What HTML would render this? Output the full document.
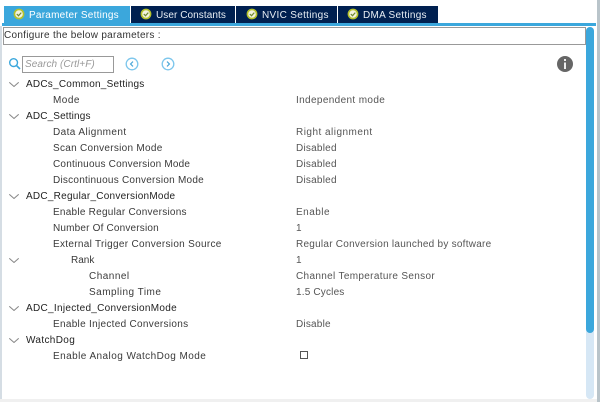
<!DOCTYPE html>
<html><head><meta charset="utf-8">
<style>
html,body{margin:0;padding:0;background:#fff}
#p{position:relative;width:600px;height:402px;overflow:hidden;background:#fff;font-family:"Liberation Sans",sans-serif;font-size:10px;color:#3a3a3a}
.a{position:absolute}
.t{position:absolute;white-space:nowrap;line-height:16px;letter-spacing:.25px}
.tab{position:absolute;top:6px;height:17px;background:#002050;color:#e8eef4;font-size:10px;line-height:18px;white-space:nowrap}
.tab svg{position:absolute;left:9px;top:1.5px}
.tab span{position:absolute;top:.5px}
.h{color:#222}
.v{left:296px;color:#555}
.l{left:53px}
.c{position:absolute;left:9px}
svg{display:block}
</style></head><body><div id="p">
<div class="a" style="left:0;top:26px;width:2px;height:376px;background:#d5dde4"></div>
<div class="a" style="left:597px;top:0;width:3px;height:402px;background:#b9c4ca"></div>
<div class="a" style="left:0;top:399px;width:597px;height:3px;background:#f0f0f0"></div>

<div class="tab" style="left:4px;width:126px;background:#3ba7dc;color:#fff;letter-spacing:.24px"><svg width="12" height="12" viewBox="0 0 12 12"><circle cx="6" cy="6" r="4.6" fill="#f3f3e0" stroke="#b5c22c" stroke-width="1.6"/><path d="M3.8 6l1.7 1.7L8.3 4.6" fill="none" stroke="#6f8a30" stroke-width="1.2"/></svg><span style="left:25px">Parameter Settings</span></div>
<div class="tab" style="left:131px;width:104px;letter-spacing:.07px"><svg width="12" height="12" viewBox="0 0 12 12"><circle cx="6" cy="6" r="4.6" fill="#f3f3e0" stroke="#b5c22c" stroke-width="1.6"/><path d="M3.8 6l1.7 1.7L8.3 4.6" fill="none" stroke="#6f8a30" stroke-width="1.2"/></svg><span style="left:25px">User Constants</span></div>
<div class="tab" style="left:236px;width:101px;letter-spacing:.31px"><svg style="left:10px" width="12" height="12" viewBox="0 0 12 12"><circle cx="6" cy="6" r="4.6" fill="#f3f3e0" stroke="#b5c22c" stroke-width="1.6"/><path d="M3.8 6l1.7 1.7L8.3 4.6" fill="none" stroke="#6f8a30" stroke-width="1.2"/></svg><span style="left:26px">NVIC Settings</span></div>
<div class="tab" style="left:338px;width:100px;letter-spacing:.27px"><svg width="12" height="12" viewBox="0 0 12 12"><circle cx="6" cy="6" r="4.6" fill="#f3f3e0" stroke="#b5c22c" stroke-width="1.6"/><path d="M3.8 6l1.7 1.7L8.3 4.6" fill="none" stroke="#6f8a30" stroke-width="1.2"/></svg><span style="left:25px">DMA Settings</span></div>
<div class="a" style="left:2px;top:23px;width:594px;height:3px;background:#3ba7dc"></div>

<div class="a" style="left:3px;top:27px;width:581px;height:16px;border:1px solid #999"></div>
<div class="t" style="left:4px;top:28px;color:#333;letter-spacing:.28px">Configure the below parameters :</div>

<div class="a" style="left:586px;top:27px;width:8px;height:372px;border-radius:4px;background:#d6e7f5"></div>
<div class="a" style="left:586px;top:27px;width:8px;height:306px;border-radius:4px;background:#3ba7dc"></div>

<svg class="a" style="left:8px;top:57px" width="13" height="13" viewBox="0 0 13 13"><circle cx="5.6" cy="5.6" r="3.9" fill="none" stroke="#3ba7dc" stroke-width="1.4"/><path d="M8.4 8.4L12 12" stroke="#3ba7dc" stroke-width="1.6"/></svg>
<div class="a" style="left:22px;top:56px;width:90px;height:15px;border:1px solid #999"></div>
<div class="t" style="left:25px;top:57px;font-style:italic;color:#999;letter-spacing:.08px">Search (Crtl+F)</div>
<svg class="a" style="left:125px;top:56.5px" width="14" height="14" viewBox="0 0 14 14"><circle cx="7" cy="7" r="5.8" fill="none" stroke="#7cc6ec" stroke-width="1.3"/><path d="M8 4.6L5.6 7 8 9.4" fill="none" stroke="#4aa6d8" stroke-width="1.2"/></svg>
<svg class="a" style="left:161px;top:56.5px" width="14" height="14" viewBox="0 0 14 14"><circle cx="7" cy="7" r="5.8" fill="none" stroke="#7cc6ec" stroke-width="1.3"/><path d="M6 4.6L8.4 7 6 9.4" fill="none" stroke="#4aa6d8" stroke-width="1.2"/></svg>
<svg class="a" style="left:557px;top:56px" width="16" height="16" viewBox="0 0 16 16"><circle cx="8" cy="8" r="8" fill="#666"/><rect x="7" y="3" width="2" height="2" fill="#eee"/><rect x="7" y="6.5" width="2" height="6.5" fill="#eee"/></svg>

<svg class="c" style="top:82px" width="10" height="5" viewBox="0 0 10 5"><path d="M.3 .3L5 4.5 9.7 .3" fill="none" stroke="#888"/></svg>
<svg class="c" style="top:114px" width="10" height="5" viewBox="0 0 10 5"><path d="M.3 .3L5 4.5 9.7 .3" fill="none" stroke="#888"/></svg>
<svg class="c" style="top:194px" width="10" height="5" viewBox="0 0 10 5"><path d="M.3 .3L5 4.5 9.7 .3" fill="none" stroke="#888"/></svg>
<svg class="c" style="top:258px" width="10" height="5" viewBox="0 0 10 5"><path d="M.3 .3L5 4.5 9.7 .3" fill="none" stroke="#888"/></svg>
<svg class="c" style="top:306px" width="10" height="5" viewBox="0 0 10 5"><path d="M.3 .3L5 4.5 9.7 .3" fill="none" stroke="#888"/></svg>
<svg class="c" style="top:338px" width="10" height="5" viewBox="0 0 10 5"><path d="M.3 .3L5 4.5 9.7 .3" fill="none" stroke="#888"/></svg>

<div class="t h" style="left:26px;top:77px;letter-spacing:.23px">ADCs_Common_Settings</div>
<div class="t l" style="top:93px;letter-spacing:.48px">Mode</div><div class="t v" style="top:93px;letter-spacing:.36px">Independent mode</div>
<div class="t h" style="left:26px;top:109px;letter-spacing:.15px">ADC_Settings</div>
<div class="t l" style="top:125px;letter-spacing:.41px">Data Alignment</div><div class="t v" style="top:125px;letter-spacing:.48px">Right alignment</div>
<div class="t l" style="top:141px;letter-spacing:.28px">Scan Conversion Mode</div><div class="t v" style="top:141px;letter-spacing:.23px">Disabled</div>
<div class="t l" style="top:157px;letter-spacing:.21px">Continuous Conversion Mode</div><div class="t v" style="top:157px;letter-spacing:.23px">Disabled</div>
<div class="t l" style="top:173px;letter-spacing:.24px">Discontinuous Conversion Mode</div><div class="t v" style="top:173px;letter-spacing:.23px">Disabled</div>
<div class="t h" style="left:26px;top:189px">ADC_Regular_ConversionMode</div>
<div class="t l" style="top:205px">Enable Regular Conversions</div><div class="t v" style="top:205px;letter-spacing:.48px">Enable</div>
<div class="t l" style="top:221px;letter-spacing:.18px">Number Of Conversion</div><div class="t v" style="top:221px">1</div>
<div class="t l" style="top:237px;letter-spacing:.3px">External Trigger Conversion Source</div><div class="t v" style="top:237px">Regular Conversion launched by software</div>
<div class="t" style="left:71px;top:253px;letter-spacing:0">Rank</div><div class="t v" style="top:253px">1</div>
<div class="t" style="left:89px;top:269px;letter-spacing:.48px">Channel</div><div class="t v" style="top:269px;letter-spacing:.33px">Channel Temperature Sensor</div>
<div class="t" style="left:89px;top:285px;letter-spacing:.48px">Sampling Time</div><div class="t v" style="top:285px;letter-spacing:.18px">1.5 Cycles</div>
<div class="t h" style="left:26px;top:301px;letter-spacing:.3px">ADC_Injected_ConversionMode</div>
<div class="t l" style="top:317px;letter-spacing:.3px">Enable Injected Conversions</div><div class="t v" style="top:317px;letter-spacing:.2px">Disable</div>
<div class="t h" style="left:26px;top:333px;letter-spacing:.35px">WatchDog</div>
<div class="t l" style="top:349px;letter-spacing:.44px">Enable Analog WatchDog Mode</div>
<div class="a" style="left:300px;top:351px;width:6px;height:6px;border:1px solid #555"></div>
</div></body></html>
